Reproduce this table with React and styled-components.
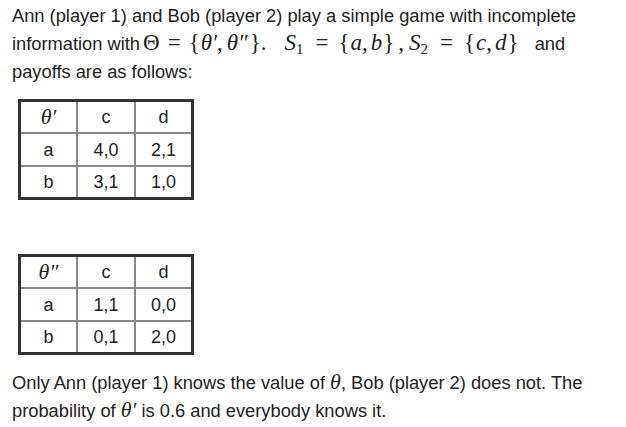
import React from "react";
import styled, { createGlobalStyle } from "styled-components";

const Global = createGlobalStyle`
  html, body { margin: 0; padding: 0; background: #fff; }
  body { font-family: "Liberation Sans", Arial, sans-serif; color: #222; }
`;

const Page = styled.div`
  padding: 2px 0 0 12px;
  width: 614px;
  font-size: 18.3px;
  line-height: 28px;
`;

const Para = styled.p`
  margin: 0 0 ${(p) => p.$after || 0}px 0;
`;

const Mi = styled.span`
  font-family: "Liberation Serif", "Times New Roman", serif;
  font-style: italic;
  font-size: ${(p) => p.$size || 23}px;
  line-height: 1;
  margin-left: ${(p) => p.$l || 0}px;
`;

const Mo = styled.span`
  font-family: "Liberation Serif", "Times New Roman", serif;
  font-style: normal;
  font-size: ${(p) => p.$size || 23}px;
  line-height: 1;
  margin-left: ${(p) => p.$l || 0}px;
  margin-right: ${(p) => p.$r || 0}px;
`;

const Sub = styled.sub`
  font-family: "Liberation Serif", "Times New Roman", serif;
  font-style: normal;
  font-size: 15px;
  line-height: 1;
  vertical-align: -4px;
`;

const Table = styled.table`
  border-collapse: separate;
  border-spacing: 0;
  border: 3px solid #333;
  table-layout: fixed;
  width: 176px;
  margin: 0 0 ${(p) => p.$after || 0}px 6px;
  font-size: 18px;
  line-height: 20px;
`;

const Cell = styled.td`
  box-sizing: border-box;
  padding: 0;
  text-align: center;
  vertical-align: middle;
  height: ${(p) => p.$h}px;
  width: ${(p) => p.$w}px;
  border-right: ${(p) => (p.$lastCol ? "none" : "2px solid #888")};
  border-bottom: ${(p) => (p.$lastRow ? "none" : "2px solid #888")};
`;

const widths = [57, 58, 55];
const heights = [32, 33, 30];

function Payoff({ theta, rows, after }) {
  const all = [[theta, "c", "d"], ...rows];
  return (
    <Table $after={after}>
      <tbody>
        {all.map((r, i) => (
          <tr key={i}>
            {r.map((c, j) => (
              <Cell
                key={j}
                $w={widths[j]}
                $h={heights[i]}
                $lastCol={j === 2}
                $lastRow={i === 2}
              >
                {c}
              </Cell>
            ))}
          </tr>
        ))}
      </tbody>
    </Table>
  );
}

export default function App() {
  return (
    <>
      <Global />
      <Page>
        <Para $after={13}>
          Ann (player 1) and Bob (player 2) play a simple game with incomplete
          <br />
          information with
          <Mo $l={3}>Θ</Mo>
          <Mo $l={8}>=</Mo>
          <Mo $l={8}>{"{"}</Mo>
          <Mi $l={1}>θ′</Mi>
          <Mo>,</Mo>
          <Mi $l={4}>θ″</Mi>
          <Mo $l={2}>{"}"}</Mo>
          <Mo>.</Mo>
          <Mi $l={18}>S</Mi>
          <Sub>1</Sub>
          <Mo $l={12}>=</Mo>
          <Mo $l={10}>{"{"}</Mo>
          <Mi $l={1}>a</Mi>
          <Mo>,</Mo>
          <Mi $l={3}>b</Mi>
          <Mo $l={1}>{"}"}</Mo>
          <Mo $l={4}>,</Mo>
          <Mi $l={5}>S</Mi>
          <Sub>2</Sub>
          <Mo $l={12}>=</Mo>
          <Mo $l={11}>{"{"}</Mo>
          <Mi $l={1}>c</Mi>
          <Mo>,</Mo>
          <Mi $l={3}>d</Mi>
          <Mo $l={1} $r={11}>{"}"}</Mo> and
          <br />
          payoffs are as follows:
        </Para>
        <Payoff
          theta={<Mi $size={22}>θ′</Mi>}
          rows={[
            ["a", "4,0", "2,1"],
            ["b", "3,1", "1,0"],
          ]}
          after={54}
        />
        <Payoff
          theta={<Mi $size={22}>θ″</Mi>}
          rows={[
            ["a", "1,1", "0,0"],
            ["b", "0,1", "2,0"],
          ]}
          after={14}
        />
        <Para>
          Only Ann (player 1) knows the value of <Mi $size={22}>θ</Mi>, Bob (player 2) does not. The
          <br />
          probability of <Mi $size={22}>θ′</Mi> is 0.6 and everybody knows it.
        </Para>
      </Page>
    </>
  );
}
